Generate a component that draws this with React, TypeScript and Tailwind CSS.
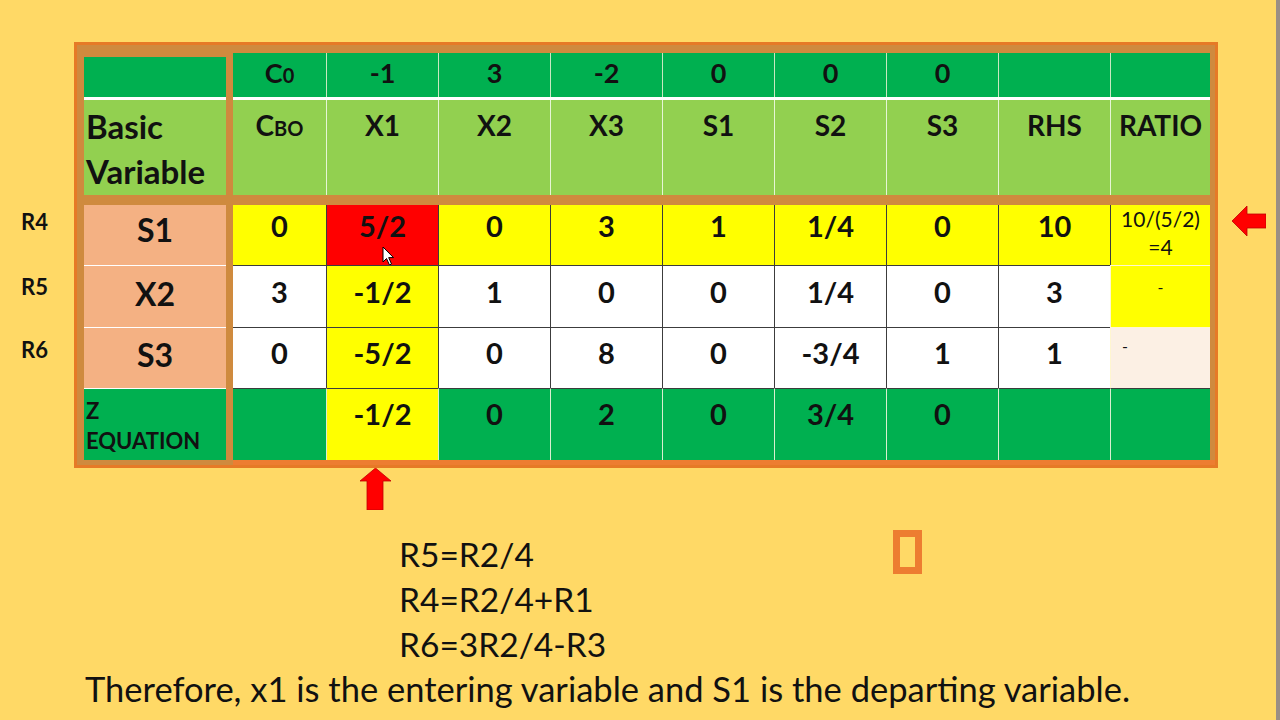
import React from 'react';

const G = 'bg-[#00b050]';
const LG = 'bg-[#92d050]';
const Y = 'bg-[#ffff00]';
const R = 'bg-[#ff0000]';
const WH = 'bg-white';
const CR = 'bg-[#fcf0e4]';

const colW = ['w-[93px]', 'w-[112px]', 'w-[112px]', 'w-[112px]', 'w-[112px]', 'w-[112px]', 'w-[112px]', 'w-[112px]', 'w-[100px]'];

const costs = ['C0', '-1', '3', '-2', '0', '0', '0', '', ''];
const heads = ['CBO', 'X1', 'X2', 'X3', 'S1', 'S2', 'S3', 'RHS', 'RATIO'];

const body = [
  {
    label: 'S1',
    vals: ['0', '5/2', '0', '3', '1', '1/4', '0', '10', ''],
    bg: [Y, R, Y, Y, Y, Y, Y, Y, Y],
    h: 'h-[60px]',
    pt: 'pt-[5px]',
    lpt: 'pt-[6px]',
  },
  {
    label: 'X2',
    vals: ['3', '-1/2', '1', '0', '0', '1/4', '0', '3', ''],
    bg: [WH, Y, WH, WH, WH, WH, WH, WH, Y],
    h: 'h-[62px]',
    pt: 'pt-[10px]',
    lpt: 'pt-[9px]',
  },
  {
    label: 'S3',
    vals: ['0', '-5/2', '0', '8', '0', '-3/4', '1', '1', ''],
    bg: [WH, Y, WH, WH, WH, WH, WH, WH, CR],
    h: 'h-[61px]',
    pt: 'pt-[9px]',
    lpt: 'pt-[8px]',
  },
];

const zVals = ['', '-1/2', '0', '2', '0', '3/4', '0', '', ''];

// header label with the small subscript look of the slide
function HeadText({ t }: { t: string }) {
  if (t === 'C0') return <span>C<span className="text-[20px]">0</span></span>;
  if (t === 'CBO') return <span>C<span className="text-[20px]">BO</span></span>;
  return <span>{t}</span>;
}

function Cursor() {
  return (
    <svg className="absolute left-[55px] top-[41px]" width="13" height="20" viewBox="0 0 13 20">
      <path d="M1 1 L1 16 L4.5 12.5 L7.5 19 L9.5 18 L6.7 11.6 L11.5 11.6 Z" fill="white" stroke="black" strokeWidth="1" strokeLinejoin="round" />
    </svg>
  );
}

function RatioCell({ row }: { row: number }) {
  if (row === 0)
    return (
      <div className="flex flex-col items-center text-[21px] font-normal leading-[28px]">
        <span>10/(5/2)</span>
        <span>=4</span>
      </div>
    );
  if (row === 1) return <div className="text-center text-[16px] font-normal leading-[20px] pt-[11px]">-</div>;
  return <div className="text-left pl-[11px] text-[16px] font-normal leading-[20px] pt-[8px]">-</div>;
}

export default function App() {
  return (
    <div className="flex w-[1280px] h-[720px] overflow-hidden bg-[#ffd966] text-[#111] font-['Lato','Open_Sans',sans-serif]">
      <div className="w-[1276px] flex flex-col">
        {/* table row with side labels */}
        <div className="flex pt-[42px]">
          {/* row names */}
          <div className="w-[74px] flex flex-col pl-[21px] pt-[167px] text-[22px] font-bold leading-[26px]">
            <span>R4</span>
            <span className="mt-[39px]">R5</span>
            <span className="mt-[37px]">R6</span>
          </div>

          {/* tableau frame */}
          <div className="w-[1144px] border-[3px] border-[#e67a26] bg-[#cf8a3e] flex pt-[8px] pl-[7px] pr-[5px]">
            {/* basic variable column */}
            <div className="w-[142px] flex flex-col">
              <div className={`${G} mt-[4px] h-[40px]`} />
              <div className="h-[3px] bg-white" />
              <div className={`${LG} h-[95px] pl-[2px] pt-[4px] text-[33px] font-bold leading-[45px]`}>
                <div>Basic</div>
                <div>Variable</div>
              </div>
              <div className="h-[10px]" />
              {body.map((r, i) => (
                <div
                  key={r.label}
                  className={`bg-[#f4b183] ${r.h} ${r.lpt} text-center text-[32px] font-bold leading-[38px] ${i > 0 ? 'border-t border-white' : ''}`}
                >
                  {r.label}
                </div>
              ))}
              <div className={`${G} h-[72px] border-t border-white pl-[2px] pt-[7px] text-[22px] font-bold leading-[30px]`}>
                <div>Z</div>
                <div>EQUATION</div>
              </div>
              <div className="h-[5px]" />
            </div>

            <div className="w-[7px]" />

            {/* data columns */}
            <div className="w-[977px] flex flex-col">
              <div className={`flex h-[44px] ${G}`}>
                {costs.map((c, i) => (
                  <div
                    key={i}
                    className={`${colW[i]} h-full flex items-center justify-center pb-[4px] text-[27px] font-bold ${i > 0 ? 'border-l border-[#c8e8c0]' : ''}`}
                  >
                    <HeadText t={c} />
                  </div>
                ))}
              </div>
              <div className="h-[3px] bg-white" />
              <div className={`flex h-[95px] ${LG}`}>
                {heads.map((c, i) => (
                  <div
                    key={c}
                    className={`${colW[i]} h-full pt-[9px] text-center text-[28px] font-bold leading-[32px] ${i > 0 ? 'border-l border-[#e6f5d6]' : ''}`}
                  >
                    <HeadText t={c} />
                  </div>
                ))}
              </div>
              <div className="h-[10px]" />
              {body.map((r, ri) => (
                <div key={r.label} className={`flex ${r.h}`}>
                  {r.vals.map((v, i) => (
                    <div
                      key={i}
                      className={`relative ${colW[i]} h-full ${r.bg[i]} ${i === 8 ? '' : r.pt} text-center text-[29px] font-bold leading-[32px] ${i > 0 ? 'border-l border-[#3c3c3c]' : ''} ${ri > 0 ? (i === 8 ? 'border-t border-[#fff6d0]' : 'border-t border-[#3c3c3c]') : ''}`}
                    >
                      {i === 8 ? <RatioCell row={ri} /> : v}
                      {ri === 0 && i === 1 && <Cursor />}
                    </div>
                  ))}
                </div>
              ))}
              <div className="flex h-[72px]">
                {zVals.map((v, i) => (
                  <div
                    key={i}
                    className={`${colW[i]} h-full ${i === 1 ? Y : G} pt-[9px] text-center text-[29px] font-bold leading-[32px] border-t border-[#3c3c3c] ${i > 0 ? 'border-l border-l-[#d8efd0]' : ''}`}
                  >
                    {v}
                  </div>
                ))}
              </div>
              <div className="h-[5px] bg-[#ed7d31] -mr-[5px]" />
            </div>
          </div>

          {/* pivot row arrow */}
          <div className="pl-[14px] pt-[164px]">
            <svg width="34" height="30" viewBox="0 0 34 30">
              <polygon points="0,15 15,0 15,8 34,8 34,22 15,22 15,30" fill="#ff0000" stroke="#c00000" strokeWidth="0.8" />
            </svg>
          </div>
        </div>

        {/* pivot column arrow */}
        <div className="pl-[360px]">
          <svg width="31" height="42" viewBox="0 0 31 42">
            <polygon points="15.5,0 31,13 23,13 23,42 7,42 7,13 0,13" fill="#ff0000" stroke="#c00000" strokeWidth="0.8" />
          </svg>
        </div>

        {/* row operations */}
        <div className="flex items-start mt-[20px]">
          <div className="w-[893px] pl-[399px] pt-[2px] text-[33.5px] leading-[45px]">
            <div>R5=R2/4</div>
            <div>R4=R2/4+R1</div>
            <div>R6=3R2/4-R3</div>
          </div>
          <div className="w-[29px] h-[44px] border-[7px] border-[#ed7d31]" />
        </div>

        <div className="pl-[85px] mt-[2px] text-[34.5px] leading-[40px] whitespace-nowrap">
          Therefore, x1 is the entering variable and S1 is the departing variable.
        </div>
      </div>
      <div className="w-[4px] h-full bg-[#9a8f84]" />
    </div>
  );
}
